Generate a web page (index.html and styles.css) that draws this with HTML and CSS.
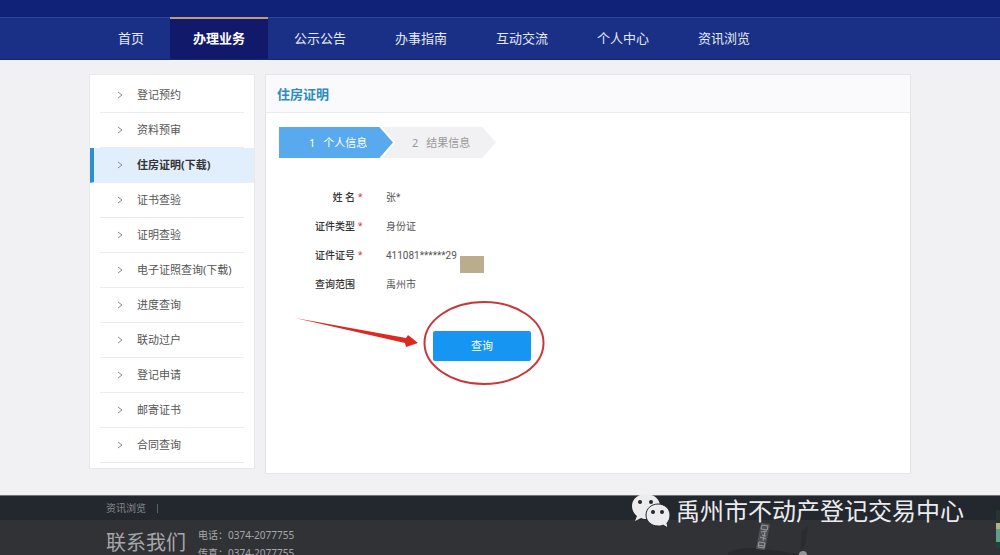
FILE: index.html
```html
<!DOCTYPE html>
<html lang="zh-CN">
<head>
<meta charset="utf-8">
<title>住房证明</title>
<link rel="stylesheet" href="styles.css">
</head>
<body>
<header class="header">
  <div class="topbar"></div>
  <nav class="nav">
    <a class="nav-link" href="#">首页</a>
    <a class="nav-link active" href="#">办理业务</a>
    <a class="nav-link" href="#">公示公告</a>
    <a class="nav-link" href="#">办事指南</a>
    <a class="nav-link" href="#">互动交流</a>
    <a class="nav-link" href="#">个人中心</a>
    <a class="nav-link" href="#">资讯浏览</a>
  </nav>
</header>

<main class="content">
  <aside class="sidebar">
    <a class="side-link" href="#"><svg class="chevron" viewBox="0 0 6 8"><path d="M1 1l4 3-4 3"/></svg>登记预约</a>
    <a class="side-link" href="#"><svg class="chevron" viewBox="0 0 6 8"><path d="M1 1l4 3-4 3"/></svg>资料预审</a>
    <a class="side-link current" href="#"><svg class="chevron" viewBox="0 0 6 8"><path d="M1 1l4 3-4 3"/></svg>住房证明(下载)</a>
    <a class="side-link" href="#"><svg class="chevron" viewBox="0 0 6 8"><path d="M1 1l4 3-4 3"/></svg>证书查验</a>
    <a class="side-link" href="#"><svg class="chevron" viewBox="0 0 6 8"><path d="M1 1l4 3-4 3"/></svg>证明查验</a>
    <a class="side-link" href="#"><svg class="chevron" viewBox="0 0 6 8"><path d="M1 1l4 3-4 3"/></svg>电子证照查询(下载)</a>
    <a class="side-link" href="#"><svg class="chevron" viewBox="0 0 6 8"><path d="M1 1l4 3-4 3"/></svg>进度查询</a>
    <a class="side-link" href="#"><svg class="chevron" viewBox="0 0 6 8"><path d="M1 1l4 3-4 3"/></svg>联动过户</a>
    <a class="side-link" href="#"><svg class="chevron" viewBox="0 0 6 8"><path d="M1 1l4 3-4 3"/></svg>登记申请</a>
    <a class="side-link" href="#"><svg class="chevron" viewBox="0 0 6 8"><path d="M1 1l4 3-4 3"/></svg>邮寄证书</a>
    <a class="side-link" href="#"><svg class="chevron" viewBox="0 0 6 8"><path d="M1 1l4 3-4 3"/></svg>合同查询</a>
  </aside>

  <section class="panel">
    <h1 class="panel-title">住房证明</h1>
    <ol class="steps">
      <li class="step step-on"><span>1</span>个人信息</li>
      <li class="step"><span>2</span>结果信息</li>
    </ol>
    <dl class="info">
      <dt>姓 名</dt><dd><i class="star">*</i>张*</dd>
      <dt>证件类型</dt><dd><i class="star">*</i>身份证</dd>
      <dt>证件证号</dt><dd><i class="star">*</i>411081******29<span class="mask"></span></dd>
      <dt>查询范围</dt><dd><i class="star"></i>禹州市</dd>
    </dl>
    <div class="actions">
      <button class="query" type="button">查询</button>
      <svg class="mark" viewBox="0 0 256 90">
        <ellipse cx="193" cy="45" rx="59.5" ry="41" fill="none" stroke="#c8383a" stroke-width="2"/>
        <path d="M4 20L115 40l2-3 10 8-12 4-1-4z" fill="#dc2a22"/>
      </svg>
    </div>
  </section>
</main>

<footer class="footer">
  <div class="foot-links"><a href="#">资讯浏览</a><span class="bar"></span></div>
  <div class="foot-main">
    <h2 class="foot-title">联系我们</h2>
    <div class="foot-text">
      <p>电话：0374-2077755</p>
      <p>传真：0374-2077755</p>
    </div>
    <svg class="ink" viewBox="0 0 110 36">
      <path d="M0 34q12-7 32-4 24 2 44 6H0z" fill="#292a2d"/>
      <path d="M74 12l6-5-3 20-5 7z" fill="#2b2c30"/>
      <path d="M33 4l9 1-5 26-9-1z" fill="#505156"/>
      <path d="M34 6l6 1-1 4-6-1zM33 13l6-1M34 16l4 1M32 18l6 2M37 13l-2 9M31 23l6 1-1 5-6-1zM30 26l6 1" fill="none" stroke="#98999d"/>
      <circle cx="75" cy="36" r="4" fill="#929397"/>
    </svg>
  </div>
  <div class="watermark">
    <svg class="wechat" viewBox="0 0 40 34">
      <path d="M15 0C6 0 1 6 1 12c0 4 2 8 5 10l-2 5 6-3c2 1 4 1 6 1C24 25 29 19 29 12S23 0 15 0z" fill="#ececee"/>
      <path d="M27 10c-7 0-12 5-12 11s5 11 12 11c2 0 4 0 5-1l5 3-1-5c2-2 3-5 3-8 0-6-5-11-12-11z" fill="#ececee" stroke="#24282d"/>
      <g fill="#24282d"><circle cx="9" cy="8" r="2"/><circle cx="20" cy="8" r="2"/><circle cx="22" cy="18" r="2"/><circle cx="31" cy="18" r="2"/></g>
    </svg>
    <span>禹州市不动产登记交易中心</span>
  </div>
  <div class="edge-tab"></div>
</footer>
</body>
</html>
```

FILE: styles.css
```css
* { box-sizing: border-box; margin: 0; padding: 0; }

body {
  display: flex;
  flex-direction: column;
  height: 100vh;
  overflow: hidden;
  background: #f1f0f3;
  color: #555;
  font: 11px/16px "Noto Sans", "Noto Sans CJK SC", sans-serif;
}

a { color: inherit; text-decoration: none; }

.topbar { height: 17px; background: #0f2277; }

.nav {
  display: flex;
  gap: 3px;
  padding: 0 9%;
  padding-left: calc(9% + 5px);
  background: #1a3087;
  border-top: 1px solid #30449a;
  border-bottom: 1px solid #16286f;
}

.nav-link {
  padding: 10px 23px 11px;
  color: #e4e9f6;
  font-size: 13px;
  line-height: 20px;
}

.nav-link.active {
  margin-top: -1px;
  padding-top: 9px;
  border-top: 2px solid #c39a72;
  background: #11196a;
  color: #fff;
  font-weight: 700;
}

.content {
  display: flex;
  align-items: flex-start;
  gap: 10px;
  padding: 14px calc(9% - 1px) 21px;
}

.sidebar {
  flex: 0 0 166px;
  padding: 3px 0 5px;
  border: 1px solid #e9e8eb;
  background: #fff;
}

.side-link {
  display: flex;
  align-items: center;
  gap: 14px;
  height: 35px;
  margin: 0 10px;
  padding-left: 17px;
  border-bottom: 1px solid #ececee;
}

.side-link.current {
  margin: 0;
  padding-left: 23px;
  border-left: 4px solid #2e8fce;
  border-bottom-color: #e1eefc;
  background: #e1eefc;
  color: #333;
  font-weight: 700;
}

.chevron { width: 6px; height: 8px; fill: none; stroke: #8c8c8c; }

.panel {
  flex: 1;
  border: 1px solid #e5e4e7;
  background: #fff;
}

.panel-title {
  padding: 9px 11px 8px;
  border-bottom: 1px solid #ebeaed;
  background: #faf9fb;
  color: #2c8bc0;
  font-size: 13px;
  line-height: 20px;
}

.steps { display: flex; padding: 14px 13px 0; list-style: none; }

.step {
  display: flex;
  align-items: center;
  gap: 8px;
  height: 31px;
  width: 114px;
  padding-left: 30px;
  background: #f1f0f2;
  color: #999;
  clip-path: polygon(0 0, 88% 0, 100% 50%, 88% 100%, 0 100%);
}

.step + .step {
  width: 114px;
  padding-left: 30px;
  margin-left: -11px;
  clip-path: polygon(0 0, 88% 0, 100% 50%, 88% 100%, 0 100%, 12% 50%);
}

.step-on { background: #58a9ee; color: #fff; }

.info {
  display: grid;
  grid-template-columns: 89px 1fr;
  row-gap: 13px;
  padding-top: 32px;
  font-family: Roboto, "Noto Sans CJK SC", sans-serif;
  font-size: 10px;
}

.info dt { color: #333; font-weight: 500; text-align: right; }
.info dd { display: flex; }
.star { width: 31px; padding-left: 3px; color: #c9453c; font-style: normal; }

.mask { width: 24px; height: 17px; margin: 8px 0 -9px 3px; background: #b9ad8d; }

.actions { position: relative; padding: 38px 0 112px 167px; }

.query {
  display: block;
  width: 98px;
  height: 30px;
  border: 0;
  border-radius: 2px;
  background: #1795f3;
  color: #fff;
  font: inherit;
}

.mark { position: absolute; top: 5px; left: 25px; width: 256px; height: 90px; pointer-events: none; }

.footer {
  position: relative;
  flex: 1;
  min-height: 0;
  border-top: 1px solid #6f7276;
  background: #313236;
}

.foot-links {
  display: flex;
  align-items: center;
  gap: 11px;
  height: 24px;
  padding-left: calc(9% + 16px);
  background: #23282e;
  color: #85878a;
  font-size: 10px;
}

.bar { width: 1px; height: 9px; background: #5c5f63; }

.foot-main {
  display: flex;
  gap: 12px;
  padding: 6px 9% 0;
  padding-left: calc(9% + 16px);
  color: #a6a7aa;
}

.foot-title { padding-top: 3px; font-size: 20px; font-weight: 400; line-height: 28px; }
.foot-text { font-size: 10px; line-height: 18px; }

.ink { position: absolute; right: 162px; top: 23px; width: 110px; height: 36px; }

.watermark {
  position: absolute;
  top: -3px;
  right: 3%;
  display: flex;
  align-items: center;
  gap: 5px;
  margin-right: 6px;
  color: #ececee;
  font-size: 24px;
  line-height: 36px;
}

.wechat { width: 40px; height: 34px; }

.edge-tab {
  position: absolute;
  top: 14px;
  right: 0;
  width: 4px;
  height: 38px;
  background: linear-gradient(#26332f 0 35%, #b5b27a 35% 50%, #5fa085 50% 85%, #17463c 85%);
}
```
